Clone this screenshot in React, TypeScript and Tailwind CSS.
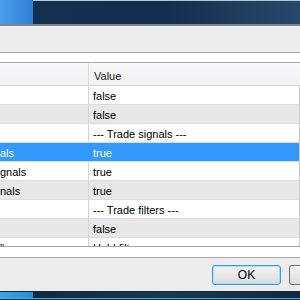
const ROWS = [
  { name: "", value: "false", tone: "white" },
  { name: "", value: "false", tone: "grey" },
  { name: "", value: "--- Trade signals ---", tone: "white" },
  { name: "als", value: "true", tone: "selected" },
  { name: "gnals", value: "true", tone: "white" },
  { name: "nals", value: "true", tone: "grey" },
  { name: "", value: "--- Trade filters ---", tone: "white" },
  { name: "", value: "false", tone: "grey" },
  { name: "''", value: "Hold filters", tone: "white" },
];

const TONE: Record<string, string> = {
  white: "bg-white text-black",
  grey: "bg-[#e8e8e8] text-black",
  selected: "bg-[#3399ff] text-white",
};

export default function App() {
  return (
    <div className="w-[300px] h-[300px] overflow-hidden flex flex-col bg-[#ececec] text-[11px] leading-none" style={{ fontFamily: '"Liberation Sans", Arial, sans-serif' }}>
      {/* desktop strip behind window */}
      <div className="h-[24px] flex shrink-0">
        <div className="w-[33px] bg-gradient-to-r from-[#4b9ce9] to-[#2f7fd5]" />
        <div className="flex-1 bg-gradient-to-r from-[#13304f] via-[#132f4d] to-[#294869] border-t border-[#b9c4cf]" />
      </div>
      <div className="h-[2px] bg-[#7c8692] shrink-0" />

      {/* toolbar area */}
      <div className="h-[26px] bg-[#ececec] shrink-0" />
      <div className="h-px bg-[#a3a5ad] shrink-0" />
      <div className="h-[9px] bg-white shrink-0" />
      <div className="h-px bg-[#a9abb3] shrink-0" />

      {/* list header */}
      <div className="h-[23px] flex shrink-0 bg-gradient-to-b from-[#f8f8fa] to-[#f1f1f3] border-b border-[#d6d6d6]">
        <div className="w-[89px] border-r border-[#dadada]" />
        <div className="flex-1 pl-[5px] pt-[8px] text-[#1e1e1e]">Value</div>
      </div>

      {/* rows */}
      <div className="h-[160px] overflow-hidden shrink-0 border-r border-[#c9c9c9]">
        {ROWS.map((r, i) => (
          <div key={i} className={`h-[19px] flex border-b border-[#dcdcdc] ${TONE[r.tone]}`}>
            <div className={`w-[89px] shrink-0 overflow-hidden whitespace-nowrap pt-[5px] border-r ${r.tone === "selected" ? "border-[#3399ff]" : "border-[#d4d4d4]"}`}>{r.name}</div>
            <div className="flex-1 pl-[4px] pt-[5px] whitespace-nowrap">{r.value}</div>
          </div>
        ))}
      </div>
      <div className="h-px bg-[#a3a5ad] shrink-0" />
      <div className="h-[10px] bg-white shrink-0" />
      <div className="h-px bg-[#a9abb3] shrink-0" />

      {/* button bar */}
      <div className="h-[33px] shrink-0 bg-[#ececec] flex items-start pt-[7px] pl-[212px] gap-[8px]">
        <button className="w-[69px] h-[20px] shrink-0 rounded-[3px] border border-[#3c9fd8] bg-gradient-to-b from-[#f4f4f4] to-[#dcdcdc] text-[12px] text-black shadow-[inset_0_0_0_1px_#a8ddf7]">OK</button>
        <button className="w-[69px] h-[20px] shrink-0 rounded-[3px] border border-[#707070] bg-gradient-to-b from-[#f4f4f4] to-[#dcdcdc] text-[12px] text-black">Cancel</button>
      </div>

      {/* taskbar */}
      <div className="h-px bg-[#1d2834] shrink-0" />
      <div className="flex-1 flex flex-col">
        <div className="flex-1 flex">
          <div className="w-[33px] bg-gradient-to-r from-[#3aa6ea] to-[#1f8ed8]" />
          <div className="flex-1 bg-gradient-to-r from-[#0f2a42] via-[#173a4e] to-[#0f2a42]" />
        </div>
        <div className="h-px bg-[#35b6e8]" />
        <div className="h-px bg-[#0d2538]" />
      </div>
    </div>
  );
}
